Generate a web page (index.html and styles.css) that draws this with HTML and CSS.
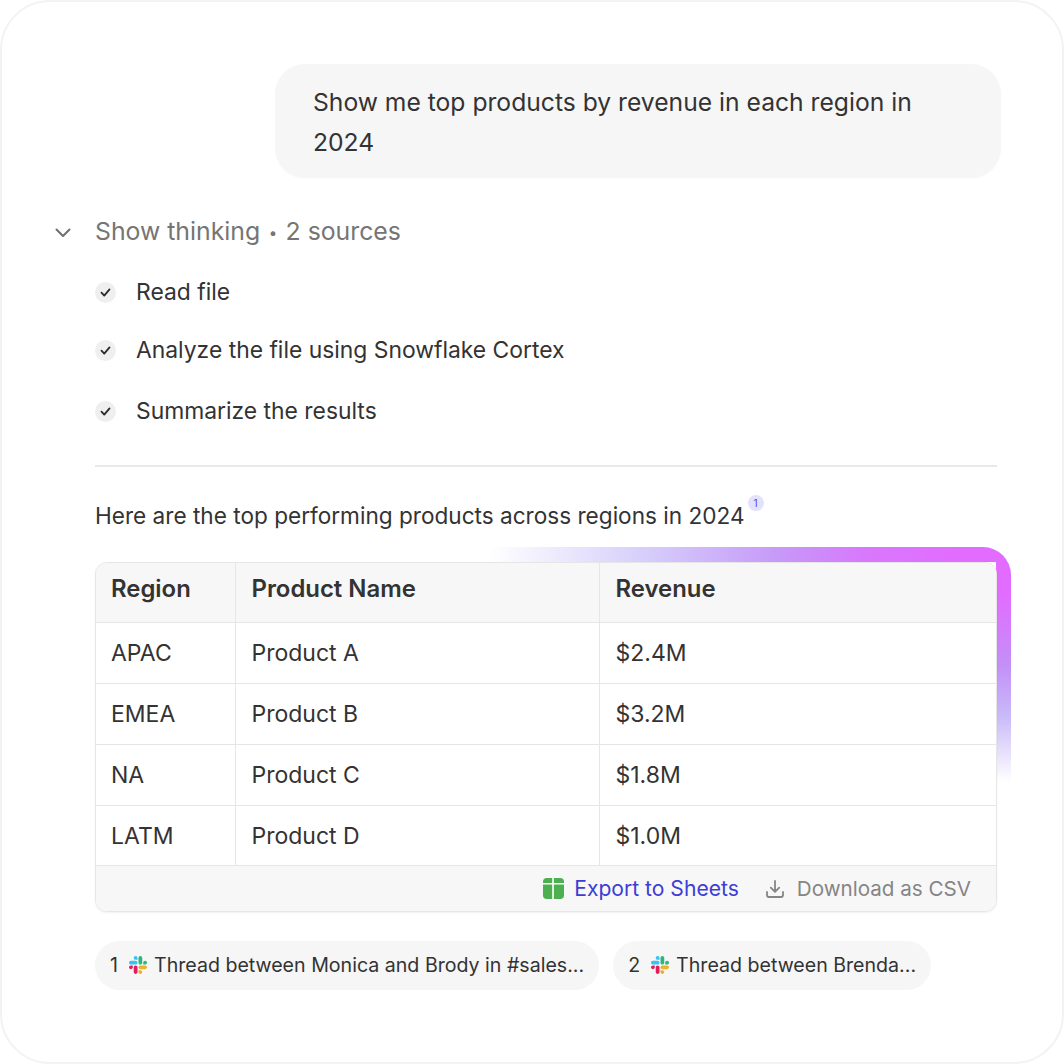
FILE: index.html
```html
<!DOCTYPE html>
<html lang="en">
<head>
<meta charset="utf-8">
<title>Chat</title>
<link rel="stylesheet" href="styles.css">
</head>
<body>
<svg class="defs" width="0" height="0" aria-hidden="true">
  <symbol id="slack" viewBox="0 0 122.8 122.8">
    <path d="M25.8 77.6c0 7.1-5.8 12.9-12.9 12.9S0 84.7 0 77.6s5.8-12.9 12.9-12.9h12.9v12.9zm6.5 0c0-7.1 5.8-12.9 12.9-12.9s12.9 5.8 12.9 12.9v32.3c0 7.1-5.8 12.9-12.9 12.9s-12.9-5.8-12.9-12.9V77.6z" fill="#e01e5a"/>
    <path d="M45.2 25.8c-7.1 0-12.9-5.8-12.9-12.9S38.1 0 45.2 0s12.9 5.8 12.9 12.9v12.9H45.2zm0 6.5c7.1 0 12.9 5.8 12.9 12.9s-5.8 12.9-12.9 12.9H12.9C5.8 58.1 0 52.3 0 45.2s5.8-12.9 12.9-12.9h32.3z" fill="#36c5f0"/>
    <path d="M97 45.2c0-7.1 5.8-12.9 12.9-12.9s12.9 5.8 12.9 12.9-5.8 12.9-12.9 12.9H97V45.2zm-6.5 0c0 7.1-5.8 12.9-12.9 12.9s-12.9-5.8-12.9-12.9V12.9C64.7 5.8 70.5 0 77.6 0s12.9 5.8 12.9 12.9v32.3z" fill="#2eb67d"/>
    <path d="M77.6 97c7.1 0 12.9 5.8 12.9 12.9s-5.8 12.9-12.9 12.9-12.9-5.8-12.9-12.9V97h12.9zm0-6.5c-7.1 0-12.9-5.8-12.9-12.9s5.8-12.9 12.9-12.9h32.3c7.1 0 12.9 5.8 12.9 12.9s-5.8 12.9-12.9 12.9H77.6z" fill="#ecb22e"/>
  </symbol>
  <symbol id="check" viewBox="0 0 22 22">
    <path d="M6.8 11.2l2.9 3 5.500-6.500" fill="none" stroke="#2a2a2a" stroke-width="1.900" stroke-linecap="round" stroke-linejoin="round"/>
  </symbol>
</svg>
<main class="card">
  <div class="bubble">Show me top products by revenue in each region in 2024</div>

  <div class="thinking">
    <svg class="chevron" viewBox="0 0 18 18"><path d="M2.500 5.500L9 12l6.500-6.500" fill="none" stroke="#6f6f6f" stroke-width="2" stroke-linecap="round" stroke-linejoin="round"/></svg>
    <span>Show thinking <span class="dot">•</span> 2 sources</span>
  </div>

  <ul class="steps">
    <li class="step"><span class="tick"><svg class="tick-icon"><use href="#check"/></svg></span>Read file</li>
    <li class="step"><span class="tick"><svg class="tick-icon"><use href="#check"/></svg></span>Analyze the file using Snowflake Cortex</li>
    <li class="step"><span class="tick"><svg class="tick-icon"><use href="#check"/></svg></span>Summarize the results</li>
  </ul>

  <hr class="rule">

  <p class="answer">Here are the top performing products across regions in 2024<sup class="cite">1</sup></p>

  <section class="table-wrap">
    <div class="glow"></div>
    <div class="table-card">
      <table class="data">
        <thead>
          <tr><th class="c1">Region</th><th class="c2">Product Name</th><th>Revenue</th></tr>
        </thead>
        <tbody>
          <tr><td>APAC</td><td>Product A</td><td>$2.4M</td></tr>
          <tr><td>EMEA</td><td>Product B</td><td>$3.2M</td></tr>
          <tr><td>NA</td><td>Product C</td><td>$1.8M</td></tr>
          <tr class="last"><td>LATM</td><td>Product D</td><td>$1.0M</td></tr>
        </tbody>
      </table>
      <div class="actions">
        <span class="action export">
          <svg class="sheet" viewBox="0 0 22 22"><rect width="22" height="22" rx="4" fill="#4caf50"/><path d="M0 6h22M10.500 0V22" stroke="#fff" stroke-width="1.700" fill="none"/></svg>
          Export to Sheets
        </span>
        <span class="action download">
          <svg class="dl" viewBox="0 0 20 20"><path d="M10 2v10.500M5.800 8.600L10 12.800l4.200-4.200M2 13v3a2 2 0 0 0 2 2h12a2 2 0 0 0 2-2v-3" fill="none" stroke="#858585" stroke-width="1.800" stroke-linecap="round" stroke-linejoin="round"/></svg>
          Download as CSV
        </span>
      </div>
    </div>
  </section>

  <div class="chips">
    <span class="chip"><span class="num">1</span><svg class="slack"><use href="#slack"/></svg><span>Thread between Monica and Brody in #sales...</span></span>
    <span class="chip"><span class="num">2</span><svg class="slack"><use href="#slack"/></svg><span>Thread between Brenda...</span></span>
  </div>
</main>
</body>
</html>
```
FILE: styles.css
```css
* { box-sizing: border-box; }
html, body { margin: 0; background: #fff; }
body {
  font-family: Inter, "Liberation Sans", sans-serif;
  color: #333;
}
.defs { position: absolute; }
.card {
  width: 1064px;
  height: 1064px;
  border: 2px solid #f3f3f3;
  border-radius: 50px;
  padding: 62px 61px 0 93px;
  overflow: hidden;
  background: #fff;
}
.bubble {
  width: 726px;
  margin-left: 180px;
  padding: 18px 38px 16px;
  background: #f6f6f6;
  border-radius: 30px;
  font-size: 24.660px;
  line-height: 40px;
  box-shadow: 0 1px 2px rgba(0,0,0,.02);
}
.thinking {
  position: relative;
  margin-top: 35px;
  font-size: 24.800px;
  line-height: 36px;
  color: #757575;
}
.dot { font-size: 15px; vertical-align: 2px; margin: 0 1.500px; }
.chevron {
  position: absolute;
  left: -41px;
  top: 11px;
  width: 18px;
  height: 18px;
}
.steps {
  list-style: none;
  margin: 23px 0 0;
  padding: 0;
}
.step {
  display: flex;
  align-items: center;
  gap: 20px;
  height: 36px;
  margin-bottom: 22px;
  font-size: 22.860px;
}
.step:nth-child(2) { margin-bottom: 25px; }
.step:last-child { margin-bottom: 0; }
.tick {
  width: 21px;
  height: 21px;
  border-radius: 50%;
  background: #efefef;
  display: flex;
  flex: none;
}
.tick-icon { width: 21px; height: 21px; }
.rule {
  margin: 36px 3px 0 0;
  width: 902px;
  height: 2px;
  border: 0;
  background: #e9e9e9;
}
.answer {
  margin: 31px 0 0;
  font-size: 22.600px;
  line-height: 36px;
  white-space: nowrap;
}
.cite {
  display: inline-block;
  vertical-align: top;
  width: 16px;
  height: 16px;
  margin: -3px 0 0 3px;
  border-radius: 50%;
  background: #e4e2fb;
  color: #4f46c8;
  font-size: 10px;
  line-height: 16px;
  text-align: center;
}
.table-wrap {
  position: relative;
  width: 902px;
  margin-top: 28px;
}
.glow {
  position: absolute;
  top: -15px;
  right: -14px;
  width: 522px;
  height: 235px;
  border-radius: 0 28px 0 0;
  background:
    linear-gradient(to right, rgba(205,190,250,0) 0%, #d6cefb 30%, #c69af8 55%, #d878fd 72%, #e26cff 90%) top left / 100% 15px no-repeat,
    linear-gradient(to bottom, #e26cff 0%, #e26cff 20%, #c38ff7 50%, #c9baf9 72%, rgba(215,210,252,0) 100%) top right / 15px 100% no-repeat;
}
.table-card {
  position: relative;
  height: 350px;
  border: 1px solid #e6e6e6;
  border-radius: 12px;
  background: #fff;
  overflow: hidden;
  box-shadow: 0 1px 2px rgba(0,0,0,.06);
}
.data {
  width: 100%;
  border-collapse: collapse;
  table-layout: fixed;
  font-size: 23px;
}
.data th, .data td {
  height: 61px;
  padding: 0 16px;
  text-align: left;
  border-bottom: 1px solid #e6e6e6;
  border-right: 1px solid #e6e6e6;
}
.data th:first-child, .data td:first-child { padding-left: 15px; }
.data th {
  height: 59px;
  padding-bottom: 7px;
  background: #f7f7f7;
  font-size: 23.900px;
  font-weight: 600;
}
.data th:last-child, .data td:last-child { border-right: 0; }
.data .last td { height: 60px; padding-top: 2px; }
.c1 { width: 139px; }
.c2 { width: 364px; }
.actions {
  display: flex;
  justify-content: flex-end;
  align-items: center;
  gap: 26px;
  height: 45px;
  padding: 1px 25px 0 0;
  background: #f7f7f7;
}
.action { display: flex; align-items: center; gap: 10px; }
.export { color: #3d3dd6; font-size: 21.100px; }
.download { color: #858585; gap: 12px; font-size: 20.620px; }
.sheet { width: 21px; height: 21px; }
.dl { width: 20px; height: 20px; }
.chips {
  display: flex;
  gap: 14px;
  margin-top: 29px;
}
.chip {
  display: flex;
  align-items: center;
  height: 49px;
  padding: 0 15px 2px;
  border-radius: 25px;
  background: #f6f6f6;
  font-size: 19.600px;
  white-space: nowrap;
}
.num { margin-right: 11px; }
.slack { width: 18px; height: 18px; margin-right: 7px; }
```
